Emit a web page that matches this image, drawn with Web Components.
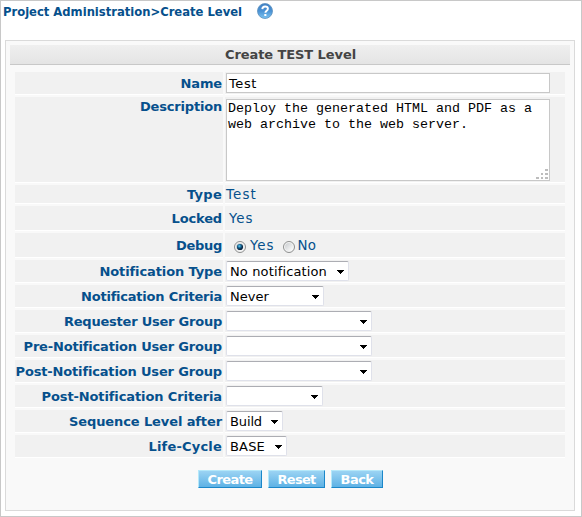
<!DOCTYPE html>
<html lang="en">
<head>
<meta charset="utf-8">
<title>Create Level</title>
<style>
html,body{margin:0;height:100%}
body{font:13px "DejaVu Sans",Verdana,sans-serif;color:#06508c;overflow:hidden}
</style>
</head>
<body>
<level-page></level-page>
<script>
const define=(name,html,init)=>customElements.define(name,class extends HTMLElement{
  constructor(){super();this.attachShadow({mode:'open'}).innerHTML=html}
  connectedCallback(){if(init)init.call(this,this.shadowRoot)}
});

/* Text set to an exact advance width through letter spacing */
define('fit-text',`<style>:host{display:inline-block;white-space:pre}span{display:inline-block}</style><span><slot></slot></span>`,function(r){
  const s=r.querySelector('span'),w=+this.getAttribute('w');
  if(!w)return;
  const n=this.textContent.length,d=(w-s.getBoundingClientRect().width)/n;
  s.style.letterSpacing=d.toFixed(4)+'px';
});

define('help-icon',`<style>:host{display:block;width:16px;height:16px}svg{display:block}</style>
<svg width="16" height="16" viewBox="0 0 16 16"><defs><linearGradient id="g" x2="0" y2="1"><stop stop-color="#3f7fc4"/><stop offset=".5" stop-color="#4a92d4"/><stop offset="1" stop-color="#7cc4f2"/></linearGradient></defs>
<circle cx="8" cy="8" r="7.5" fill="url(#g)" stroke="#5c8fbd" stroke-width=".8"/>
<path d="M5.3 6.1C5.4 4.3 6.5 3.5 8.1 3.5c1.7 0 2.8.9 2.8 2.3 0 2-2.5 2-2.5 4" fill="none" stroke="#fff" stroke-width="1.9"/><rect x="7.3" y="11" width="2.1" height="2" fill="#fff"/></svg>`);

define('form-row',`<style>
:host{display:grid;grid-template-columns:208px 340px;column-gap:2px;margin-bottom:2px;height:var(--h,22px)}
div{background:#f1f1f1;box-shadow:0 1px #fff;box-sizing:border-box;height:100%;display:flex;align-items:center}
.l{justify-content:flex-end;font-weight:bold;padding-right:1px}
.v{padding-left:1px}
:host([top]) div{align-items:flex-start}
:host([top]) .l{padding-top:2px}
:host([top]) .v{padding-top:2px}
</style><div class="l"><slot name="label"></slot></div><div class="v"><slot></slot></div>`);

define('text-field',`<style>:host{display:block;box-sizing:border-box;width:324px;height:20px;border:1px solid #c8c8c8;background:#fff;color:#000;padding:2px 0 0 2px;line-height:15px}</style><slot></slot>`);

define('text-box',`<style>:host{display:block;position:relative;box-sizing:border-box;width:324px;height:82px;border:1px solid #c8c8c8;background:#fff;color:#000;font:13.333px/16px "Liberation Mono","Courier New",monospace;padding:1px 0 0 1px}
svg{position:absolute;right:1px;bottom:1px}</style><slot></slot>
<svg width="12" height="10" viewBox="0 0 12 10" fill="#bdbdbd"><path d="M9 0h3v2H9zM5 4h2v2H5zM9 4h3v2H9zM0 8h3v2H0zM5 8h2v2H5zM9 8h3v2H9z"/></svg>`);

define('drop-down',`<style>:host{display:flex;align-items:center;justify-content:space-between;box-sizing:border-box;height:20px;border:1px solid #dfe1ea;border-top-color:#acadb3;border-radius:2px;background:#fff;color:#000;padding:0 4px 0 3px}
svg{display:block;margin-top:2px}</style><span><slot></slot></span><svg width="7" height="4" viewBox="0 0 7 4"><path d="M0 0h7v1H6v1H5v1H4v1H3V3H2V2H1V1H0z"/></svg>`,function(){this.style.width=this.getAttribute('width')+'px'});

define('radio-dot',`<style>:host{display:block;width:12px;height:12px}circle.d{display:none}:host([checked]) circle.d{display:block}svg{display:block}</style>
<svg width="12" height="12" viewBox="0 0 12 12"><defs><linearGradient id="a" x2="1" y2="1"><stop stop-color="#c9cccf"/><stop offset="1" stop-color="#fff"/></linearGradient><radialGradient id="b" cx=".4" cy=".35"><stop stop-color="#6fd0f5"/><stop offset=".5" stop-color="#19719f"/><stop offset="1" stop-color="#0b2a48"/></radialGradient></defs>
<circle cx="6" cy="6" r="5.5" fill="#f4f4f4" stroke="#8e8f8f"/><circle cx="6" cy="6" r="4" fill="url(#a)"/><circle class="d" cx="6" cy="6" r="3.1" fill="url(#b)"/></svg>`);

define('push-button',`<style>:host{display:flex;justify-content:center;box-sizing:border-box;height:18px;border:1px solid;border-color:#b4e8fa #1b87c9 #1b87c9 #b4e8fa;background:linear-gradient(#9bd3f3,#5eb2e5);color:#fff;font-weight:bold;line-height:17px}</style><slot></slot>`,function(){this.style.width=this.getAttribute('width')+'px'});

define('level-panel',`<style>
:host{display:block;box-sizing:border-box;width:570px;height:471px;border:1px solid #dadada;background:#f9f9f9;padding:4px}
header{box-sizing:border-box;height:20px;border-bottom:1px solid #c8c8c8;background:linear-gradient(#efefef,#e4e4e4);color:#444;font-weight:bold;display:flex;justify-content:center;line-height:19px;padding-left:1px}
main{padding:7px 0 0 5px;display:flex;flex-direction:column;gap:1px}
footer{display:flex;gap:6px;padding:11px 0 0 188px}
</style><header><slot name="title"></slot></header><main><slot></slot></main><footer><slot name="actions"></slot></footer>`);

define('level-page',`<style>
:host{display:flex;flex-direction:column;box-sizing:border-box;width:582px;height:517px;border:1px solid #c8c8c8;background:#fff;padding:0 0 0 4px}
nav{height:39px;display:flex;align-items:flex-start;font-size:11.6px;font-weight:bold;margin-left:-2px}
nav fit-text{line-height:13px;margin-top:5px}
nav help-icon{margin:2px 0 0 15px}
.val{font-size:13.4px}
</style>
<nav><fit-text w="239">Project Administration&gt;Create Level</fit-text><help-icon></help-icon></nav>
<level-panel>
<fit-text slot="title" w="131">Create TEST Level</fit-text>
<form-row><fit-text slot="label" w="41.5">Name</fit-text><text-field><fit-text w="28">Test</fit-text></text-field></form-row>
<form-row top style="--h:85px"><fit-text slot="label" w="82">Description</fit-text><text-box>Deploy the generated HTML and PDF as a<br>web archive to the web server.</text-box></form-row>
<form-row style="--h:18px"><fit-text slot="label" w="35">Type</fit-text><fit-text class="val" w="31">Test</fit-text></form-row>
<form-row style="--h:24px"><fit-text slot="label" w="50.5">Locked</fit-text><fit-text class="val" w="24.5" style="margin-left:3px">Yes</fit-text></form-row>
<form-row style="--h:24px"><fit-text slot="label" w="46">Debug</fit-text><radio-dot checked style="margin:3px 4px 0 8px"></radio-dot><fit-text class="val" w="24.5">Yes</fit-text><radio-dot style="margin:3px 3px 0 8px"></radio-dot><fit-text class="val" w="18.5">No</fit-text></form-row>
<form-row><fit-text slot="label" w="122">Notification Type</fit-text><drop-down width="123"><fit-text w="97">No notification</fit-text></drop-down></form-row>
<form-row><fit-text slot="label" w="140.5">Notification Criteria</fit-text><drop-down width="98"><fit-text w="39">Never</fit-text></drop-down></form-row>
<form-row><fit-text slot="label" w="158">Requester User Group</fit-text><drop-down width="146"></drop-down></form-row>
<form-row><fit-text slot="label" w="198">Pre-Notification User Group</fit-text><drop-down width="146"></drop-down></form-row>
<form-row><fit-text slot="label" w="206">Post-Notification User Group</fit-text><drop-down width="146"></drop-down></form-row>
<form-row><fit-text slot="label" w="180">Post-Notification Criteria</fit-text><drop-down width="97"></drop-down></form-row>
<form-row><fit-text slot="label" w="153">Sequence Level after</fit-text><drop-down width="57"><fit-text w="32">Build</fit-text></drop-down></form-row>
<form-row><fit-text slot="label" w="73.5">Life-Cycle</fit-text><drop-down width="61"><fit-text w="35">BASE</fit-text></drop-down></form-row>
<push-button slot="actions" width="64"><fit-text w="45">Create</fit-text></push-button>
<push-button slot="actions" width="57"><fit-text w="38">Reset</fit-text></push-button>
<push-button slot="actions" width="52"><fit-text w="33">Back</fit-text></push-button>
</level-panel>`);
</script>
</body>
</html>
